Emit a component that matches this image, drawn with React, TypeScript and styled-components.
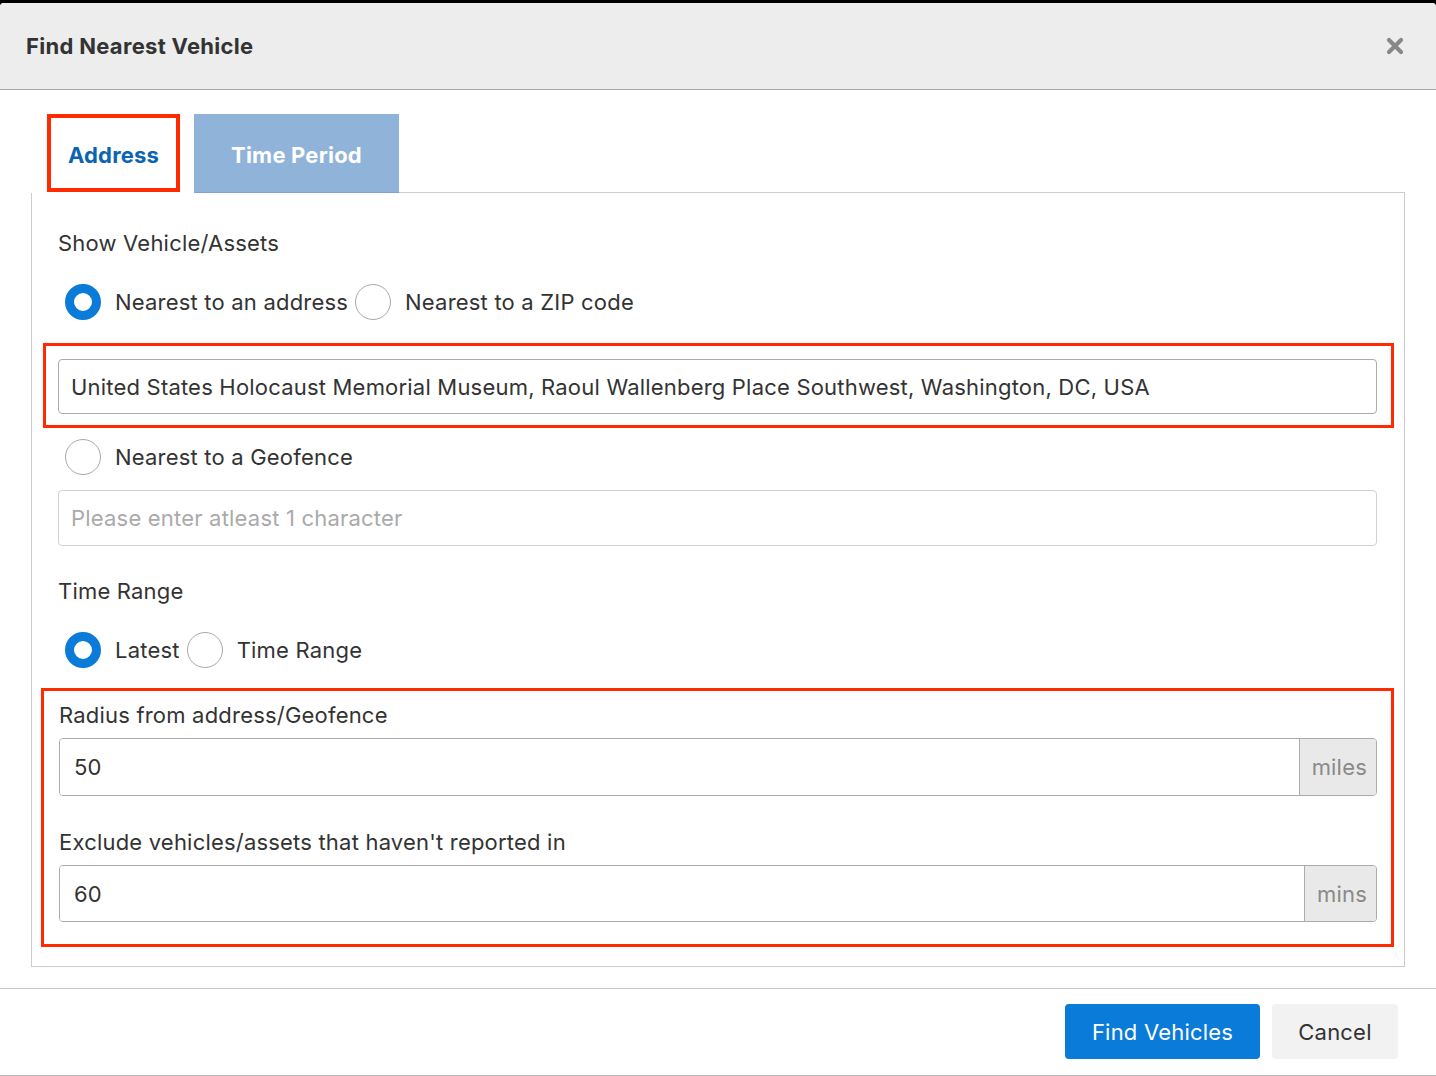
import React from "react";
import styled, { createGlobalStyle } from "styled-components";

const FONT = `Inter, "Liberation Sans", Arial, sans-serif`;

const Global = createGlobalStyle`
  html, body { margin: 0; padding: 0; background: #000; }
  body { font-family: ${FONT}; color: #333; letter-spacing: 0.2px; }
  * { box-sizing: border-box; }
`;

const Modal = styled.div`
  margin-top: 3px;
  width: 1436px;
  height: 1073px;
  background: #fff;
  border-radius: 4px 4px 0 0;
  border-bottom: 1px solid #bbb;
  display: flex;
  flex-direction: column;
  overflow: hidden;
`;

const Header = styled.div`
  height: 87px;
  background: #ededed;
  border-bottom: 1px solid #a9a9a9;
  display: flex;
  align-items: center;
  justify-content: space-between;
  padding: 0 31px 0 26px;
`;

const Title = styled.h4`
  margin: 0;
  font-size: 22px;
  font-weight: 700;
  color: #333;
  letter-spacing: 0.3px;
`;

const Close = styled.button`
  border: 0;
  background: transparent;
  padding: 0;
  width: 20px;
  height: 20px;
  display: flex;
  align-items: center;
  justify-content: center;
  cursor: pointer;
`;

const Body = styled.div`
  padding: 24px 31px 21px 31px;
  border-bottom: 1px solid #c8c8c8;
`;

const TabList = styled.div`
  display: flex;
  gap: 14px;
  padding-left: 16px;
  height: 79px;
`;

const Tab = styled.div<{ $active?: boolean }>`
  width: ${(p) => (p.$active ? "133px" : "205px")};
  height: ${(p) => (p.$active ? "78px" : "79px")};
  display: flex;
  align-items: center;
  justify-content: center;
  font-size: 22px;
  font-weight: 700;
  color: ${(p) => (p.$active ? "#0b64b2" : "#fff")};
  background: ${(p) => (p.$active ? "#fff" : "#8fb3d9")};
  border: ${(p) => (p.$active ? "4px solid #ff2a00" : "0")};
  border-bottom: ${(p) => (p.$active ? "4px solid #ff2a00" : "1px solid #7ea3cc")};
  padding-top: 4px;
`;

const TabFiller = styled.div`
  flex: 1;
  border-bottom: 1px solid #ccc;
  margin-left: -14px;
`;

const Panel = styled.div`
  border: 1px solid #ccc;
  border-top: 0;
  padding: 35px 27px 19px 26px;
  display: flex;
  flex-direction: column;
`;

const Label = styled.div<{ $mt?: number }>`
  font-size: 22px;
  line-height: 30px;
  color: #333;
  margin-top: ${(p) => p.$mt ?? 0}px;
`;

const RadioRow = styled.div<{ $mt?: number }>`
  display: flex;
  align-items: center;
  height: 36px;
  margin-top: ${(p) => p.$mt ?? 0}px;
  padding-left: 7px;
`;

const RadioOption = styled.label`
  display: flex;
  align-items: center;
  margin-right: 7px;
  font-size: 22px;
  color: #333;
`;

const RadioCircle = styled.span<{ $checked?: boolean }>`
  width: 36px;
  height: 36px;
  border-radius: 50%;
  margin-right: 14px;
  background: #fff;
  border: ${(p) => (p.$checked ? "9px solid #0a7bd9" : "1px solid #a8a8a8")};
  flex-shrink: 0;
`;

const Highlight = styled.div<{ $mt?: number; $ml?: number }>`
  border: 3px solid #ff2a00;
  margin-top: ${(p) => p.$mt ?? 0}px;
  margin-left: ${(p) => p.$ml ?? -15}px;
  margin-right: -17px;
  display: flex;
  flex-direction: column;
`;

const HighlightInner = styled.div<{ $pad: string }>`
  padding: ${(p) => p.$pad};
  display: flex;
  flex-direction: column;
`;

const TextInput = styled.input<{ $light?: boolean; $mt?: number }>`
  width: 100%;
  height: ${(p) => (p.$light ? 56 : 55)}px;
  margin-top: ${(p) => p.$mt ?? 0}px;
  border: 1px solid ${(p) => (p.$light ? "#d2d2d2" : "#ababab")};
  border-radius: 4px;
  padding: 0 12px;
  font-family: ${FONT};
  font-size: 22px;
  letter-spacing: 0.2px;
  color: #333;
  outline: none;
  &::placeholder { color: #aaa; }
`;

const Group = styled.div<{ $h: number; $mt?: number }>`
  display: flex;
  height: ${(p) => p.$h}px;
  margin-top: ${(p) => p.$mt ?? 0}px;
  border: 1px solid #ababab;
  border-radius: 4px;
  overflow: hidden;
`;

const GroupInput = styled.input`
  flex: 1;
  min-width: 0;
  border: 0;
  padding: 0 14px;
  font-family: ${FONT};
  font-size: 22px;
  letter-spacing: 0.2px;
  color: #333;
  outline: none;
`;

const Addon = styled.span`
  background: #e9e9e9;
  border-left: 1px solid #ababab;
  color: #8a8a8a;
  font-size: 22px;
  display: flex;
  align-items: center;
  padding: 0 9px 0 12px;
`;

const Footer = styled.div`
  display: flex;
  justify-content: flex-end;
  gap: 12px;
  padding: 15px 38px 0 0;
`;

const Button = styled.button<{ $primary?: boolean }>`
  width: ${(p) => (p.$primary ? 195 : 126)}px;
  height: 55px;
  border: 0;
  border-radius: 4px;
  font-family: ${FONT};
  font-size: 22px;
  letter-spacing: 0.2px;
  padding: 0;
  background: ${(p) => (p.$primary ? "#0a7bd9" : "#f2f2f2")};
  color: ${(p) => (p.$primary ? "#fff" : "#333")};
  cursor: pointer;
`;

const Radio = ({ checked, children }: { checked?: boolean; children: React.ReactNode }) => (
  <RadioOption>
    <RadioCircle $checked={checked} />
    {children}
  </RadioOption>
);

export default function App() {
  return (
    <>
      <Global />
      <Modal>
        <Header>
          <Title>Find Nearest Vehicle</Title>
          <Close aria-label="Close">
            <svg width="18" height="18" viewBox="0 0 18 18">
              <path d="M3 3 L15 15 M15 3 L3 15" stroke="#888" strokeWidth="4.2" strokeLinecap="round" />
            </svg>
          </Close>
        </Header>
        <Body>
          <TabList>
            <Tab $active>Address</Tab>
            <Tab>Time Period</Tab>
            <TabFiller />
          </TabList>
          <Panel>
            <Label>Show Vehicle/Assets</Label>
            <RadioRow $mt={26}>
              <Radio checked>Nearest to an address</Radio>
              <Radio>Nearest to a ZIP code</Radio>
            </RadioRow>
            <Highlight $mt={23}>
              <HighlightInner $pad="13px 14px 11px 12px">
                <TextInput
                  readOnly
                  value="United States Holocaust Memorial Museum, Raoul Wallenberg Place Southwest, Washington, DC, USA"
                />
              </HighlightInner>
            </Highlight>
            <RadioRow $mt={11}>
              <Radio>Nearest to a Geofence</Radio>
            </RadioRow>
            <TextInput $light $mt={15} placeholder="Please enter atleast 1 character" />
            <Label $mt={30}>Time Range</Label>
            <RadioRow $mt={26}>
              <Radio checked>Latest</Radio>
              <Radio>Time Range</Radio>
            </RadioRow>
            <Highlight $mt={20} $ml={-17}>
              <HighlightInner $pad="9px 14px 22px 15px">
                <Label>Radius from address/Geofence</Label>
                <Group $h={58} $mt={8}>
                  <GroupInput readOnly value="50" />
                  <Addon>miles</Addon>
                </Group>
                <Label $mt={31}>Exclude vehicles/assets that haven't reported in</Label>
                <Group $h={57} $mt={8}>
                  <GroupInput readOnly value="60" />
                  <Addon>mins</Addon>
                </Group>
              </HighlightInner>
            </Highlight>
          </Panel>
        </Body>
        <Footer>
          <Button $primary>Find Vehicles</Button>
          <Button>Cancel</Button>
        </Footer>
      </Modal>
    </>
  );
}
